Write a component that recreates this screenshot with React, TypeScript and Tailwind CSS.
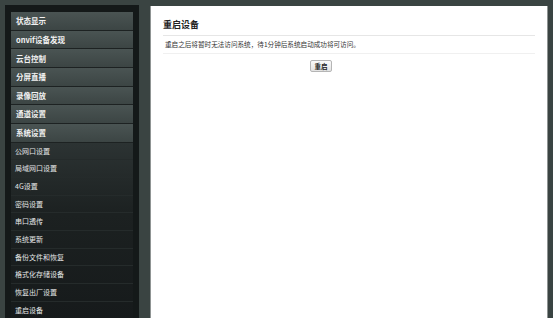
import React from 'react';

const topItems = ['状态显示', 'onvif设备发现', '云台控制', '分屏直播', '录像回放', '通道设置', '系统设置'];
const subItems = [
  '公网口设置',
  '局域网口设置',
  '4G设置',
  '密码设置',
  '串口透传',
  '系统更新',
  '备份文件和恢复',
  '格式化存储设备',
  '恢复出厂设置',
  '重启设备',
];

const font = { fontFamily: '"Noto Sans CJK SC", "Noto Sans", sans-serif' };

export default function App() {
  return (
    <div className="w-[553px] h-[318px] overflow-hidden bg-[#3a4442] flex" style={font}>
      {/* sidebar */}
      <div className="w-[134px] ml-[5px] mt-[5px] bg-[#141919] px-[6px] pt-[7px] shrink-0">
        {topItems.map((t) => (
          <div
            key={t}
            className="h-[18.67px] flex items-center pl-[5px] text-[7.5px] font-bold text-[#f2f2f2] bg-gradient-to-b from-[#4a5453] to-[#3c4544] border-b border-[#1d2222]"
          >
            {t}
          </div>
        ))}
        <div className="bg-gradient-to-b from-[#2c3333] via-[#1c2121] via-40% to-[#161a1b]">
          {subItems.map((t) => (
            <div
              key={t}
              className="h-[17.67px] flex items-center pl-[4px] text-[7px] text-[#e4e6e6] border-b border-[#252b2b]"
            >
              {t}
            </div>
          ))}
        </div>
      </div>

      {/* main panel */}
      <div className="ml-[11px] mt-[6px] w-[398px] bg-white border-x border-[#8f9493] px-[12px]">
        <div className="pt-[14px] pb-[6px] text-[9px] font-bold text-[#222] leading-none">重启设备</div>
        <div className="border-t border-[#e6e6e6]" />
        <div className="h-[17px] flex items-center pl-[2px] text-[6.6px] text-[#333]">
          重启之后将暂时无法访问系统，待1分钟后系统启动成功将可访问。
        </div>
        <div className="border-t border-[#f0f0f0]" />
        <div className="flex pl-[147px] pt-[6px]">
          <button className="w-[22px] h-[12px] flex items-center justify-center text-[6.5px] font-bold text-[#222] bg-gradient-to-b from-[#fafafa] to-[#e3e3e3] border border-[#b5b5b5] rounded-[2px] leading-none">
            重启
          </button>
        </div>
      </div>
    </div>
  );
}
